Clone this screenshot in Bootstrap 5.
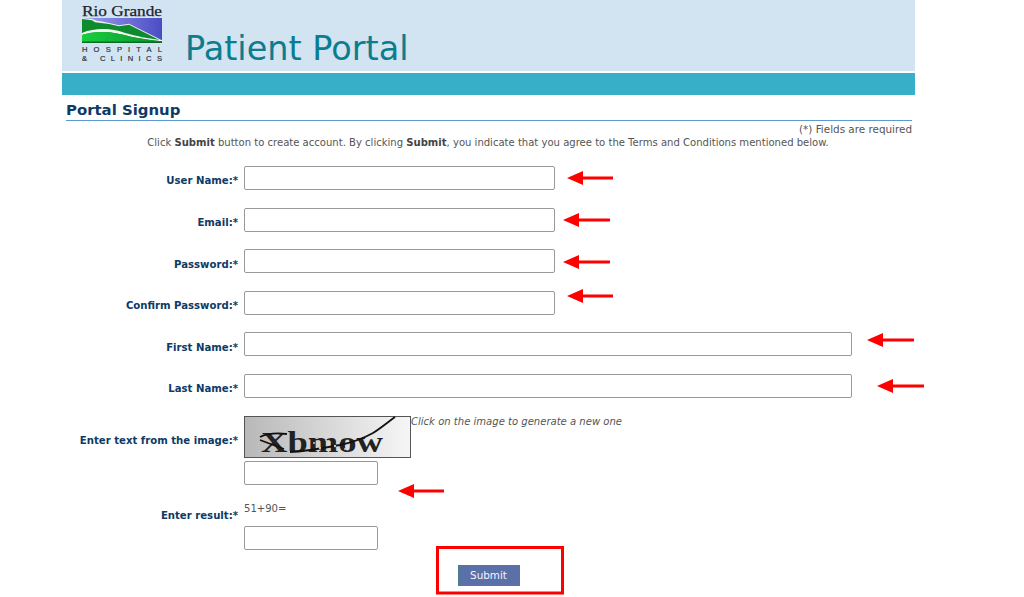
<!DOCTYPE html>
<html lang="en">
<head>
<meta charset="utf-8">
<title>Patient Portal</title>
<link href="https://cdn.jsdelivr.net/npm/bootstrap@5.3.0/dist/css/bootstrap.min.css" rel="stylesheet">
<style>
html,body{height:597px;overflow:hidden;background:#fff}
body{font-family:"DejaVu Sans",Verdana,sans-serif;font-size:10.05px;color:#555;position:relative}
.shell{width:853px;margin-left:62px}
.banner{height:71px;background:#d2e3f1;padding-left:20px}
.logo-box{width:82px;height:67px;flex:none}
.portal-title{font-family:"DejaVu Sans",sans-serif;font-size:33.5px;line-height:40px;color:#0c7c8f;margin:29px 0 0 21px;font-weight:400;white-space:nowrap}
.teal-bar{height:22px;background:#38afc9;margin-top:2px}
.page-head{font-size:14.9px;font-weight:700;color:#0e3a66;margin:6px 0 0 4px;line-height:18px;border-bottom:1px solid #5b9bd0;padding-bottom:1px;width:846px}
.req-note{text-align:right;width:850px;line-height:14px;margin-top:1px;font-size:10.4px}
.intro{text-align:center;line-height:14px;width:852px}
.intro b{color:#444}
.lab{width:176px;flex:none;text-align:right;font-weight:700;color:#0e3a66;font-size:10.15px;margin-right:6px;white-space:nowrap}
.line-row{height:24px;margin-bottom:17.6px}
.line-row .lab{padding-top:6px}
.form-area{margin-top:16px}
.fld{height:24px;border:1px solid #999;border-radius:2px;background:#fff;display:block;padding:0 4px}
.fld-md{width:311px}.fld-lg{width:608px}.fld-sm{width:134px}
.cap-lab{padding-top:17px}
.cap-wrap{height:42px}
.cap-hint{font-style:italic;white-space:nowrap;line-height:14px;margin-top:-1px}
.cap-img{width:167px;height:42px;display:block;flex:none}
.cap-input{margin-top:3px}
.sum-row{margin-top:14px}
.sum-lab{padding-top:9px}
.sum-text{line-height:14px;height:21px;margin-bottom:6px;padding-top:3px}
.sub-row{width:852px;margin-top:15px}
.send-btn{width:62px;height:21px;padding:0;background:#5b6fa9;border:1px solid #4f7f86;border-radius:0;color:#f4f6fc;font-size:10.4px;line-height:18px;margin-left:1px;font-family:"DejaVu Sans",sans-serif}
.marks{position:absolute;left:0;top:0;pointer-events:none}
</style>
</head>
<body>
<div class="shell">
  <div class="banner d-flex">
    <svg class="logo-box" viewBox="0 -3 82 67" aria-label="Rio Grande Hospital and Clinics logo">
      <defs><linearGradient id="sky" x1="0" x2="1"><stop offset="0" stop-color="#a0a0f0"/><stop offset="1" stop-color="#4a4cc4"/></linearGradient>
      <linearGradient id="gr" x1="0" x2="1"><stop offset="0" stop-color="#16d03c"/><stop offset="1" stop-color="#0c8f30"/></linearGradient></defs>
      <text x="0" y="12.500" font-family="Liberation Serif,serif" font-size="15.500" fill="#1b2430" stroke="#1b2430" stroke-width=".25" textLength="80" lengthAdjust="spacingAndGlyphs">Rio Grande</text>
      <rect x="0" y="15" width="80" height="25" fill="url(#sky)"/>
      <path d="M0 15 L10 16 C13 17 14 18 20 18.500 L27 20 L37 22.300 L47 20.700 L60 27.300 L80 37.300 L80 40 L0 40Z" fill="#e6f2ea"/>
      <path d="M0 16 L10 17.300 L13 19.300 L27 21 L37 23.300 L47 21.700 L60 28.300 L80 38.300 L80 40 L0 40Z" fill="#0f8a2e"/>
      <path d="M0 30 C7 27 14 26 20 26 C30 26 38 28 43 30 C50 32 56 33 60 34.300 L80 37.300 L80 38.300 C70 37.300 60 36 50 34 C40 31 30 29 20 29 C12 29 6 30 0 32Z" fill="#f0f8f0"/>
      <path d="M0 32 C6 30 12 29 20 29 C30 29 40 31 50 34 C60 36 70 37.300 80 38.300 L80 40 L0 40Z" fill="url(#gr)"/>
      <rect x="0" y="38.500" width="80" height="1.500" fill="#0b6a28"/>
      <text x="0" y="48.500" font-family="Liberation Sans,sans-serif" font-size="7.600" fill="#333" stroke="#333" stroke-width=".2" textLength="80">HOSPITAL</text>
      <text x="0" y="58" font-family="Liberation Sans,sans-serif" font-size="7.600" fill="#333" stroke="#333" stroke-width=".2" textLength="80">&amp; CLINICS</text>
    </svg>
    <h1 class="portal-title">Patient Portal</h1>
  </div>
  <div class="teal-bar"></div>
  <h2 class="page-head">Portal Signup</h2>
  <div class="req-note">(*) Fields are required</div>
  <div class="intro">Click <b>Submit</b> button to create account. By clicking <b>Submit</b>, you indicate that you agree to the Terms and Conditions mentioned below.</div>

  <form class="form-area" onsubmit="return false">
    <div class="line-row d-flex align-items-center"><label class="lab" for="u">User Name:*</label><input id="u" class="fld fld-md"></div>
    <div class="line-row d-flex align-items-center"><label class="lab" for="e">Email:*</label><input id="e" class="fld fld-md"></div>
    <div class="line-row d-flex align-items-center"><label class="lab" for="p">Password:*</label><input id="p" type="password" class="fld fld-md"></div>
    <div class="line-row d-flex align-items-center"><label class="lab" for="c">Confirm Password:*</label><input id="c" type="password" class="fld fld-md"></div>
    <div class="line-row d-flex align-items-center"><label class="lab" for="f">First Name:*</label><input id="f" class="fld fld-lg"></div>
    <div class="line-row d-flex align-items-center"><label class="lab" for="l">Last Name:*</label><input id="l" class="fld fld-lg"></div>

    <div class="d-flex">
      <label class="lab cap-lab" for="t">Enter text from the image:*</label>
      <div>
        <div class="cap-wrap d-flex">
          <svg class="cap-img" viewBox="0 0 167 42" aria-label="captcha image">
            <defs><linearGradient id="cg" x1="0" x2="1"><stop offset="0" stop-color="#b8b8b8"/><stop offset="1" stop-color="#f6f6f6"/></linearGradient></defs>
            <rect x=".5" y=".5" width="166" height="41" fill="url(#cg)" stroke="#555"/>
            <text x="17" y="36" font-family="Liberation Serif,serif" font-size="30" font-weight="700" fill="#222" textLength="122" lengthAdjust="spacingAndGlyphs">Xbmow</text>
            <path d="M16 21 C24 17 34 17 43 18 M16 24 L40 33 M46 36 C66 35 84 31 96 29 C110 26 120 22 129 17 C137 12 144 6 151 1" fill="none" stroke="#111" stroke-width="1.800"/>
            <g fill="#c8c8c8"><circle cx="70" cy="27" r="1"/><circle cx="76" cy="32" r="1.200"/><circle cx="82" cy="24" r="1"/><circle cx="91" cy="30" r="1.200"/><circle cx="96" cy="25" r="1"/><circle cx="101" cy="33" r="1"/><circle cx="86" cy="34" r="1"/><circle cx="73" cy="22" r="1"/></g>
          </svg>
          <span class="cap-hint">Click on the image to generate a new one</span>
        </div>
        <input id="t" class="fld fld-sm cap-input">
      </div>
    </div>

    <div class="sum-row d-flex">
      <label class="lab sum-lab" for="r">Enter result:*</label>
      <div>
        <div class="sum-text">51+90=</div>
        <input id="r" class="fld fld-sm">
      </div>
    </div>

    <div class="sub-row d-flex justify-content-center">
      <button type="submit" class="btn send-btn">Submit</button>
    </div>
  </form>
</div>

<svg class="marks" width="1024" height="597" viewBox="0 0 1024 597" aria-hidden="true">
  <g fill="#f00">
    <path d="M567 178l16-7v5.500h30v3h-30v5.500z"/>
    <path d="M563 220l16-7v5.500h31v3h-31v5.500z"/>
    <path d="M563 262l16-7v5.500h31v3h-31v5.500z"/>
    <path d="M567 296l16-7v5.500h30v3h-30v5.500z"/>
    <path d="M867 340l16-7v5.500h31v3h-31v5.500z"/>
    <path d="M877 386l16-7v5.500h31v3h-31v5.500z"/>
    <path d="M398 491l16-7v5.500h30v3h-30v5.500z"/>
  </g>
  <rect x="437.500" y="547.500" width="125" height="45.500" fill="none" stroke="#f00" stroke-width="3"/>
</svg>
<script src="https://cdn.jsdelivr.net/npm/bootstrap@5.3.0/dist/js/bootstrap.bundle.min.js"></script>
</body>
</html>
